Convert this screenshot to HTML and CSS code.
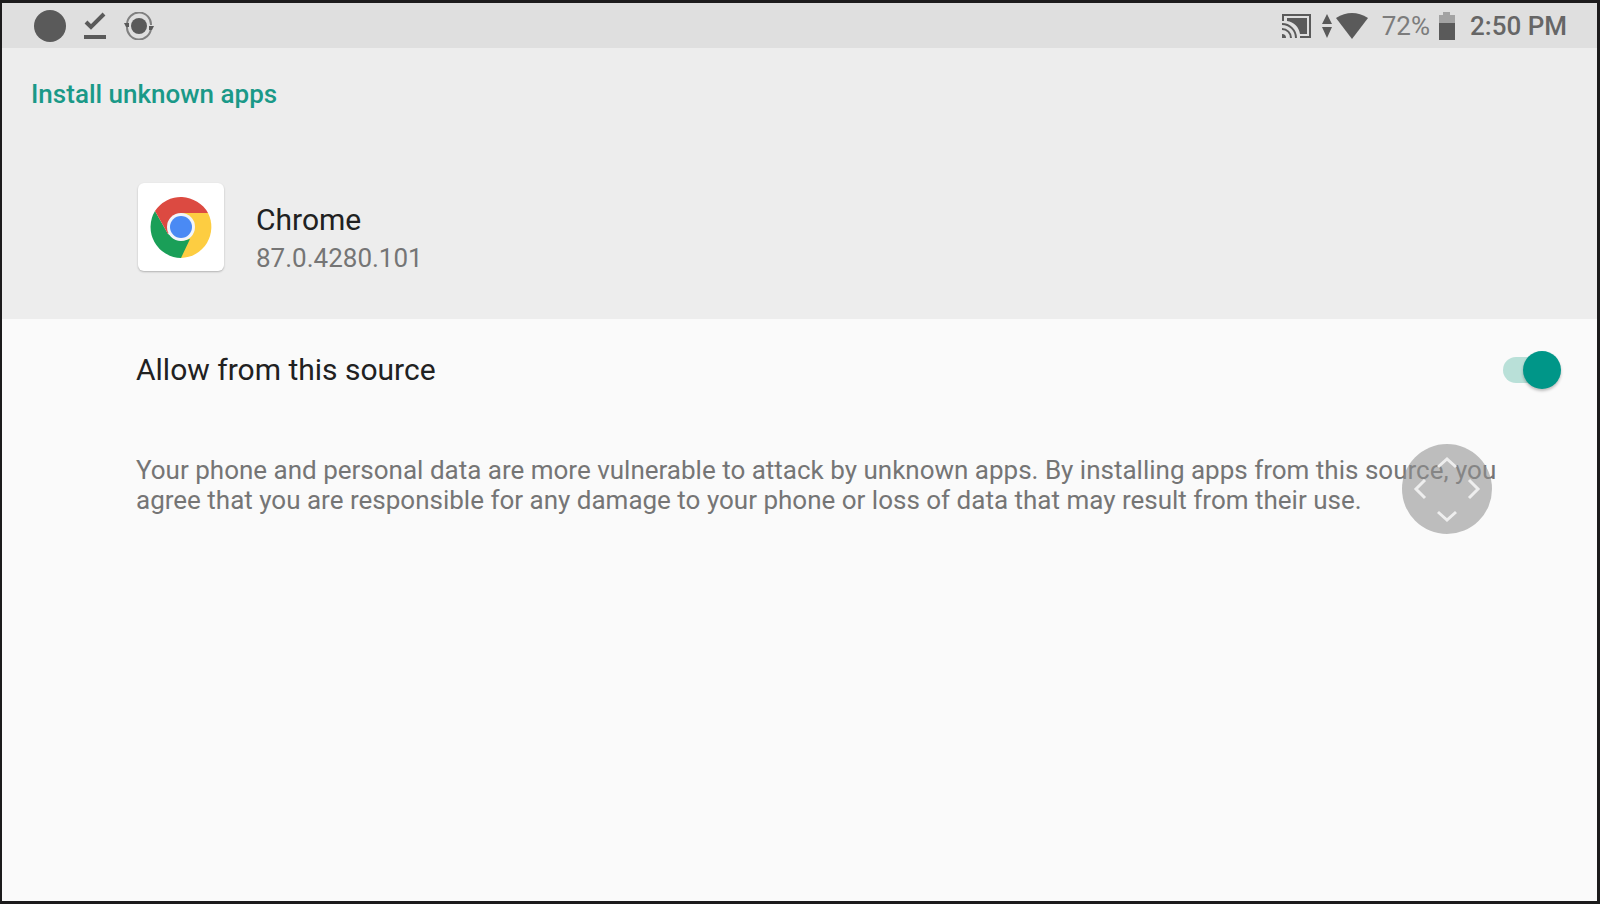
FILE: index.html
```
<!DOCTYPE html>
<html lang="en">
<head>
<meta charset="utf-8">
<meta name="viewport" content="width=device-width, initial-scale=1">
<title>Install unknown apps</title>
<link rel="stylesheet" href="styles.css">
</head>
<body>
<div class="screen">
  <div class="status-bar">
    <div class="status-left">
      <svg class="icon" width="32" height="32" viewBox="0 0 32 32"><circle cx="16" cy="16" r="16"/></svg>
      <svg class="icon" width="24" height="28" viewBox="0 0 24 28">
        <path d="M3 10l5 5L21 2" fill="none" stroke="#5a5a5a" stroke-width="4"/>
        <path d="M1 23h22v4H1z"/>
      </svg>
      <svg class="icon" width="30" height="28" viewBox="0 0 30 28">
        <circle cx="15" cy="14" r="8"/>
        <path d="M3 12a12 12 0 0 1 24 1M27 16a12 12 0 0 1-24-1" fill="none" stroke="#808080" stroke-width="2"/>
        <path d="M0 11h5v4H2zM25 14h5l-2 4h-3z"/>
      </svg>
    </div>
    <div class="status-right">
      <svg class="icon" width="30" height="26" viewBox="0 0 30 26">
        <path d="M1 8V2h27v22H18" fill="none" stroke="#5a5a5a" stroke-width="2"/>
        <path d="M5 5h20v16h-7C17 14 12 9 5 8z"/>
        <path d="M0 11a14 14 0 0 1 14 14M0 16a9 9 0 0 1 9 9" fill="none" stroke="#5a5a5a" stroke-width="2"/>
        <path d="M0 21a4 4 0 0 1 4 4H0z"/>
      </svg>
      <svg class="icon data" width="10" height="24" viewBox="0 0 10 24"><path d="M5 0l5 10H0zM5 24l5-11H0z"/></svg>
      <svg class="icon wifi" width="32" height="26" viewBox="0 0 32 26"><path d="M0 5Q16-5 32 5L16 26z"/></svg>
      <span class="percent">72%</span>
      <svg class="icon battery" width="16" height="28" viewBox="0 0 16 28">
        <path d="M4 0h7v3h5v8H0V3h4z" fill="#a3a3a3"/>
        <path d="M0 11h16v17H0z"/>
      </svg>
      <span class="time">2:50 PM</span>
    </div>
  </div>

  <div class="header">
    <h1>Install unknown apps</h1>
    <div class="app">
      <div class="app-icon">
        <svg width="62" height="62" viewBox="0 0 62 62">
          <path d="M31 31L31 17H58A31 31 0 0 1 31 62z" fill="#fdcd41"/>
          <path d="M5 15L18 38L31 45L40 43L31 62A31 31 0 0 1 5 15z" fill="#1a9f58"/>
          <path d="M5 15A31 31 0 0 1 58 17H31L18 38z" fill="#dc4a41"/>
          <circle cx="31" cy="31" r="14" fill="#f2f5fa"/>
          <circle cx="31" cy="31" r="11" fill="#4a8af4"/>
        </svg>
      </div>
      <div class="app-text">
        <div class="app-name">Chrome</div>
        <div class="app-version">87.0.4280.101</div>
      </div>
    </div>
  </div>

  <div class="content">
    <div class="row">
      <label for="allowSource">Allow from this source</label>
      <input id="allowSource" class="switch" type="checkbox" role="switch" checked>
    </div>
    <div class="warning">
      <p>Your phone and personal data are more vulnerable to attack by unknown apps. By installing apps from this source, you agree that you are responsible for any damage to your phone or loss of data that may result from their use.</p>
      <button class="pad" type="button" aria-label="Move">
        <svg width="90" height="90" viewBox="0 0 90 90">
          <path d="M36 23l9-8 9 8M36 68l9 8 9-8M23 36l-9 9 9 9M67 36l9 9-9 9" fill="none" stroke="#eee" stroke-width="3"/>
        </svg>
      </button>
    </div>
  </div>
</div>
</body>
</html>
```
FILE: styles.css
```
* {
  box-sizing: border-box;
}

body {
  margin: 0;
  font-family: Roboto, Arial, sans-serif;
  font-size: 26px;
  line-height: 30px;
  color: #757575;
}

.screen {
  min-height: 100vh;
  border: 3px solid #1c1b1c;
  border-left-width: 2px;
  background: #fafafa;
}

/* status bar */
.status-bar {
  display: flex;
  justify-content: space-between;
  height: 45px;
  padding: 0 30px 0 32px;
  background: #dfdfdf;
}
.status-left,
.status-right {
  display: flex;
  align-items: center;
}
.status-left {
  gap: 17px;
}
.icon {
  display: block;
  fill: #5a5a5a;
}
.data {
  margin-left: 10px;
}
.wifi {
  margin-left: 4px;
}
.percent {
  margin-left: 14px;
  color: #7c7c7c;
}
.battery {
  margin: 0 15px 0 9px;
}
.time {
  font-weight: 500;
  color: #666;
}

/* app header */
.header {
  padding: 30px 30px 41px 29px;
  background: #ededed;
}
h1 {
  margin: 0;
  font-size: 26px;
  font-weight: 500;
  line-height: 32px;
  color: #1a9988;
}
.app {
  display: flex;
  align-items: flex-start;
  gap: 32px;
  padding: 73px 0 0 107px;
}
.app-icon {
  display: flex;
  align-items: center;
  justify-content: center;
  width: 86px;
  height: 88px;
  border-radius: 6px;
  background: #fff;
  box-shadow: 0 1px 2px rgba(0, 0, 0, .25);
}
.app-text {
  padding-top: 19px;
}
.app-name {
  line-height: 36px;
  font-size: 30px;
  color: #212121;
}
.app-version {
  line-height: 40px;
}

/* setting */
.content {
  padding: 0 36px 0 134px;
}
.row {
  display: flex;
  align-items: center;
  justify-content: space-between;
  height: 102px;
  font-size: 30px;
  color: #212121;
}
.switch {
  -webkit-appearance: none;
  appearance: none;
  position: relative;
  width: 58px;
  height: 38px;
  margin: 0;
  cursor: pointer;
}
.switch:before {
  content: "";
  position: absolute;
  top: 6px;
  left: 0;
  width: 54px;
  height: 26px;
  border-radius: 13px;
  background: #b9e0d8;
}
.switch:after {
  content: "";
  position: absolute;
  top: 0;
  left: 0;
  width: 38px;
  height: 38px;
  border-radius: 50%;
  background: #fff;
  box-shadow: 0 2px 3px rgba(0, 0, 0, .25);
}
.switch:checked:after {
  left: 20px;
  background: #009688;
}

.warning {
  position: relative;
  padding: 34px 16px 34px 0;
}
.warning p {
  margin: 0;
}

/* floating touch pad */
.pad {
  position: absolute;
  top: 23px;
  right: 69px;
  width: 90px;
  height: 90px;
  padding: 0;
  border: 0;
  border-radius: 50%;
  background: rgba(145, 145, 145, .58);
}
.pad svg {
  display: block;
}
```
